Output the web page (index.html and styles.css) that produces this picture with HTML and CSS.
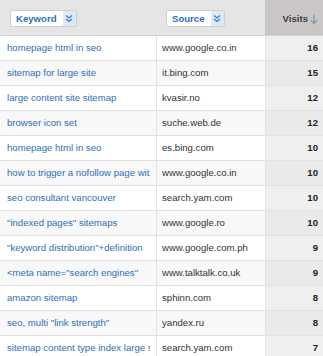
FILE: index.html
```html
<!DOCTYPE html>
<html>
<head>
<meta charset="utf-8">
<link rel="stylesheet" href="styles.css">
</head>
<body>
<div class="table">
  <div class="head">
    <div class="hcell">
      <span class="pick"><span class="pick-label">Keyword</span><span class="pick-btn"><svg width="8" height="9" viewBox="0 0 8 9"><path d="M1 1.5 L4 4 L7 1.5 M1 5 L4 7.5 L7 5" fill="none" stroke="#3d7cc4" stroke-width="1.3"/></svg></span></span>
    </div>
    <div class="hcell">
      <span class="pick"><span class="pick-label">Source</span><span class="pick-btn"><svg width="8" height="9" viewBox="0 0 8 9"><path d="M1 1.5 L4 4 L7 1.5 M1 5 L4 7.5 L7 5" fill="none" stroke="#3d7cc4" stroke-width="1.3"/></svg></span></span>
    </div>
    <div class="hcell hvisits">Visits<svg class="arrow" width="8" height="11" viewBox="0 0 8 11"><path d="M4 0.5 V9.5 M0.8 6.3 L4 9.5 L7.2 6.3" fill="none" stroke="#8c9bb0" stroke-width="1.4"/></svg></div>
  </div>
  <div class="row"><div class="kw"><span>homepage html in seo</span></div><div class="src">www.google.co.in</div><div class="num">16</div></div>
  <div class="row alt"><div class="kw"><span>sitemap for large site</span></div><div class="src">it.bing.com</div><div class="num">15</div></div>
  <div class="row"><div class="kw"><span>large content site sitemap</span></div><div class="src">kvasir.no</div><div class="num">12</div></div>
  <div class="row alt"><div class="kw"><span>browser icon set</span></div><div class="src">suche.web.de</div><div class="num">12</div></div>
  <div class="row"><div class="kw"><span>homepage html in seo</span></div><div class="src">es.bing.com</div><div class="num">10</div></div>
  <div class="row alt"><div class="kw"><span>how to trigger a nofollow page with links</span></div><div class="src">www.google.co.in</div><div class="num">10</div></div>
  <div class="row"><div class="kw"><span>seo consultant vancouver</span></div><div class="src">search.yam.com</div><div class="num">10</div></div>
  <div class="row alt"><div class="kw"><span>"indexed pages" sitemaps</span></div><div class="src">www.google.ro</div><div class="num">10</div></div>
  <div class="row"><div class="kw"><span>"keyword distribution"+definition</span></div><div class="src">www.google.com.ph</div><div class="num">9</div></div>
  <div class="row alt"><div class="kw"><span>&lt;meta name="search engines"</span></div><div class="src">www.talktalk.co.uk</div><div class="num">9</div></div>
  <div class="row"><div class="kw"><span>amazon sitemap</span></div><div class="src">sphinn.com</div><div class="num">8</div></div>
  <div class="row alt"><div class="kw"><span>seo, multi "link strength"</span></div><div class="src">yandex.ru</div><div class="num">8</div></div>
  <div class="row"><div class="kw"><span>sitemap content type index large site</span></div><div class="src">search.yam.com</div><div class="num">7</div></div>
</div>
</body>
</html>
```
FILE: styles.css
```css
html, body {
  margin: 0;
  padding: 0;
  background: #ffffff;
}
body {
  font-family: "Liberation Sans", Arial, sans-serif;
  font-size: 9.6px;
  color: #333333;
  overflow: hidden;
}
.table {
  width: 323px;
}
.head, .row {
  display: grid;
  grid-template-columns: 157px 108px 58px;
}
.head {
  height: 35px;
  background: #e5e5e5;
  border-bottom: 1px solid #d4d4d4;
}
.hcell {
  display: flex;
  align-items: center;
  padding-left: 10px;
  padding-top: 2px;
}
.hcell:nth-child(2) {
  padding-left: 9px;
}
.hvisits {
  background: #cac6c6;
  justify-content: flex-end;
  padding-right: 5px;
  padding-left: 0;
  font-weight: bold;
  color: #3a3f48;
  gap: 2px;
}
.arrow {
  margin-top: 1px;
}
.pick {
  display: inline-flex;
  align-items: stretch;
  height: 15px;
  background: #ffffff;
  border: 1px solid #cfcfcf;
  border-radius: 2px;
}
.pick-label {
  display: flex;
  align-items: center;
  font-weight: bold;
  color: #2f6fb6;
  padding: 0 6px 0 5px;
}
.pick-btn {
  display: flex;
  align-items: center;
  justify-content: center;
  width: 13px;
  background: #dce9f6;
}
.row {
  height: 24px;
  border-bottom: 0.75px solid #e2e2e2;
  line-height: 24px;
}
.row > div {
  white-space: nowrap;
  overflow: hidden;
}
.kw {
  color: #2f6fb6;
  padding-left: 7px;
  border-right: 1px solid #e2e2e2;
}
.kw span {
  display: block;
  overflow: hidden;
  margin-right: 6px;
}
.src {
  padding-left: 5px;
  color: #333333;
}
.num {
  text-align: right;
  padding-right: 5px;
  font-weight: bold;
  color: #222222;
  background: #efefef;
  border-left: 1px solid #e2e2e2;
}
.row.alt .kw, .row.alt .src {
  background: #f8f8f8;
}
.row.alt .num {
  background: #eaeaea;
}
```
